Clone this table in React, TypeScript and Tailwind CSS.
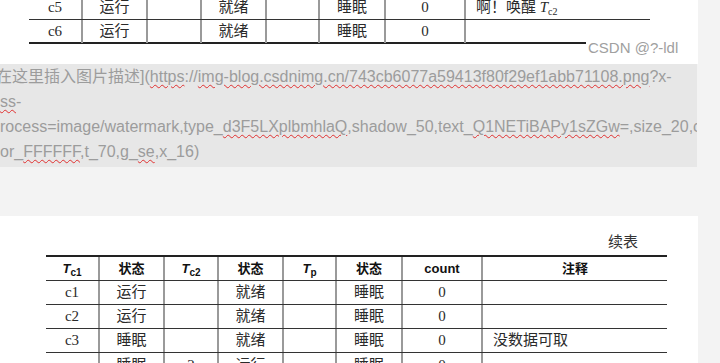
import type { ReactNode } from "react";

const serif = "font-['Liberation_Serif','Noto_Sans_CJK_SC',serif]";
const sans = "font-['Liberation_Sans','Noto_Sans_CJK_SC',sans-serif]";

const cols = "grid grid-cols-[54px_65px_54px_65px_53px_66px_80px_184px]";

function Cell({ children, left, last }: { children?: ReactNode; left?: boolean; last?: boolean }) {
  return (
    <div
      className={`flex h-full items-center ${left ? "justify-start pl-[10px]" : "justify-center"} ${
        last ? "" : "border-r-2 border-[#9a9a9a]"
      }`}
    >
      {children}
    </div>
  );
}

function Row({ cells, border }: { cells: ReactNode[]; border: string }) {
  return (
    <div className={`${cols} h-[24px] ${border} text-[15px] text-[#2a2a2a] ${serif}`}>
      {cells.map((c, i) => (
        <Cell key={i} left={i === 7} last={i === 7}>
          {c}
        </Cell>
      ))}
    </div>
  );
}

function Tsub({ sub, bold }: { sub: string; bold?: boolean }) {
  return (
    <span className={bold ? "font-bold" : ""}>
      <span className="italic">T</span>
      <span className="relative top-[3px] text-[10px]">{sub}</span>
    </span>
  );
}

const Wavy = ({ children }: { children: ReactNode }) => (
  <span className="underline decoration-wavy decoration-[#e03030] decoration-1 underline-offset-2">{children}</span>
);

export default function App() {
  return (
    <div className="h-[363px] w-[720px] overflow-hidden bg-[#f3f3f3]">
      {/* top part of a table image */}
      <div className="relative h-[64px] w-[698px] overflow-hidden bg-white">
        <div className="ml-[29px] mt-[-4px] w-[621px]">
          <Row border="border-b border-[#333]" cells={["c5", "运行", "", "就绪", "", "睡眠", "0", <span>啊！唤醒 <Tsub sub="c2" /></span>]} />
          <Row border="border-b-2 border-[#222]" cells={["c6", "运行", "", "就绪", "", "睡眠", "0", ""]} />
        </div>
        <div className={`absolute left-[586px] top-[39px] bg-white px-[2px] text-[15px] leading-[18px] text-[#a0a0a0] ${sans}`}>
          CSDN @?-ldl
        </div>
      </div>

      {/* markdown image placeholder */}
      <div className={`h-[103px] w-[697px] overflow-hidden bg-[#e7e7e7] text-[16px] leading-[25px] text-[#9c9c9c] ${sans}`}>
        <div className="ml-[-4px] whitespace-nowrap">
          在这里插入图片描述](<Wavy>https</Wavy>://<Wavy>img-blog.csdnimg.cn/743cb6077a59413f80f29ef1abb71108.png</Wavy>?x-
        </div>
        <div className="whitespace-nowrap">
          <Wavy>ss</Wavy>-
        </div>
        <div className="whitespace-nowrap">
          rocess=image/watermark,type_<Wavy>d3F5LXplbmhlaQ</Wavy>,shadow_50,text_<Wavy>Q1NETiBAPy1sZGw</Wavy>=,size_20,c
        </div>
        <div className="whitespace-nowrap">
          or_<Wavy>FFFFFF</Wavy>,t_70,g_<Wavy>se</Wavy>,x_16)
        </div>
      </div>

      <div className="h-[49px]" />

      {/* continued table */}
      <div className="h-[147px] w-[698px] overflow-hidden bg-white pt-[17px]">
        <div className={`ml-[608px] h-[22px] text-[15px] leading-[18px] text-[#333] ${serif}`}>续表</div>
        <div className="ml-[46px] w-[621px] border-t-2 border-[#222]">
          <div className={`${cols} h-[24px] border-b border-[#333] text-[13px] font-bold text-[#111] ${sans}`}>
            <Cell><Tsub sub="c1" /></Cell>
            <Cell>状态</Cell>
            <Cell><Tsub sub="c2" /></Cell>
            <Cell>状态</Cell>
            <Cell><Tsub sub="p" /></Cell>
            <Cell>状态</Cell>
            <Cell>count</Cell>
            <Cell last>注释</Cell>
          </div>
          <Row border="border-b border-[#333]" cells={["c1", "运行", "", "就绪", "", "睡眠", "0", ""]} />
          <Row border="border-b border-[#333]" cells={["c2", "运行", "", "就绪", "", "睡眠", "0", ""]} />
          <Row border="border-b border-[#333]" cells={["c3", "睡眠", "", "就绪", "", "睡眠", "0", "没数据可取"]} />
          <Row border="" cells={["", "睡眠", "2", "运行", "", "睡眠", "0", ""]} />
        </div>
      </div>
    </div>
  );
}
